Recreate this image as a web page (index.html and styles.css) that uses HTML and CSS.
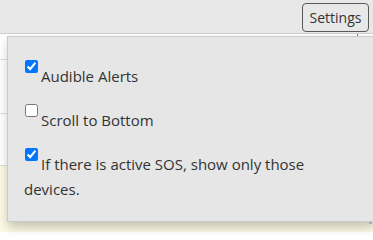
FILE: index.html
```html
<!DOCTYPE html>
<html>
<head>
<meta charset="utf-8">
<link rel="stylesheet" href="styles.css">
</head>
<body>
<div class="topbar">
  <button class="btn">Settings</button>
</div>
<div class="table">
  <div class="row row1"><span class="redtick"></span></div>
  <div class="row row2"></div>
  <div class="row row3"></div>
  <div class="row row4"><span class="thumb"></span></div>
</div>
<div class="menu">
  <p class="item"><input type="checkbox" checked>Audible Alerts</p>
  <p class="item"><input type="checkbox">Scroll to Bottom</p>
  <p class="item"><input type="checkbox" checked>If there is active SOS, show only those devices.</p>
</div>
</body>
</html>
```

FILE: styles.css
```css
html, body {
  margin: 0;
  padding: 0;
  background: #ffffff;
  font-family: "Open Sans", "Noto Sans", sans-serif;
  color: #333333;
  overflow: hidden;
}

.topbar {
  height: 33px;
  background: #e8e8e8;
  border-bottom: 1px solid #d2d2d2;
  display: flex;
  justify-content: flex-end;
  align-items: flex-start;
  padding-right: 4px;
}

.btn {
  margin-top: 3px;
  height: 29px;
  width: 67px;
  padding: 0;
  font-family: inherit;
  font-size: 14px;
  color: #333333;
  background: #e8e8e8;
  border: 1px solid #5a5a5a;
  border-radius: 4px;
}

.table {
  display: flex;
  flex-direction: column;
}

.row {
  border-bottom: 1px solid #dddddd;
  display: flex;
  justify-content: flex-end;
}

.row1 { height: 25px; padding-right: 15px; }
.row2 { height: 53px; }
.row3 { height: 51px; }
.row4 {
  height: 58px;
  background: #fcf8e3;
  border-bottom: none;
  align-items: flex-end;
  padding-right: 1px;
  padding-bottom: 8px;
}

.redtick {
  width: 1px;
  height: 7px;
  background: #d9534f;
}

.thumb {
  width: 3px;
  height: 7px;
  background: #c8c8c8;
}

.menu {
  position: absolute;
  left: 7px;
  top: 36px;
  width: 333px;
  height: 164px;
  padding: 20px 16px 0 16px;
  background: #e6e6e6;
  border: 1px solid rgba(0, 0, 0, 0.12);
  box-shadow: 1px 5px 10px rgba(0, 0, 0, 0.22);
  font-size: 15px;
  line-height: 25px;
}

.item {
  margin: 0 0 12px 0;
}

.item input {
  width: 13px;
  height: 13px;
  margin: 3px 3px 3px 1px;
  vertical-align: 9px;
}
```
